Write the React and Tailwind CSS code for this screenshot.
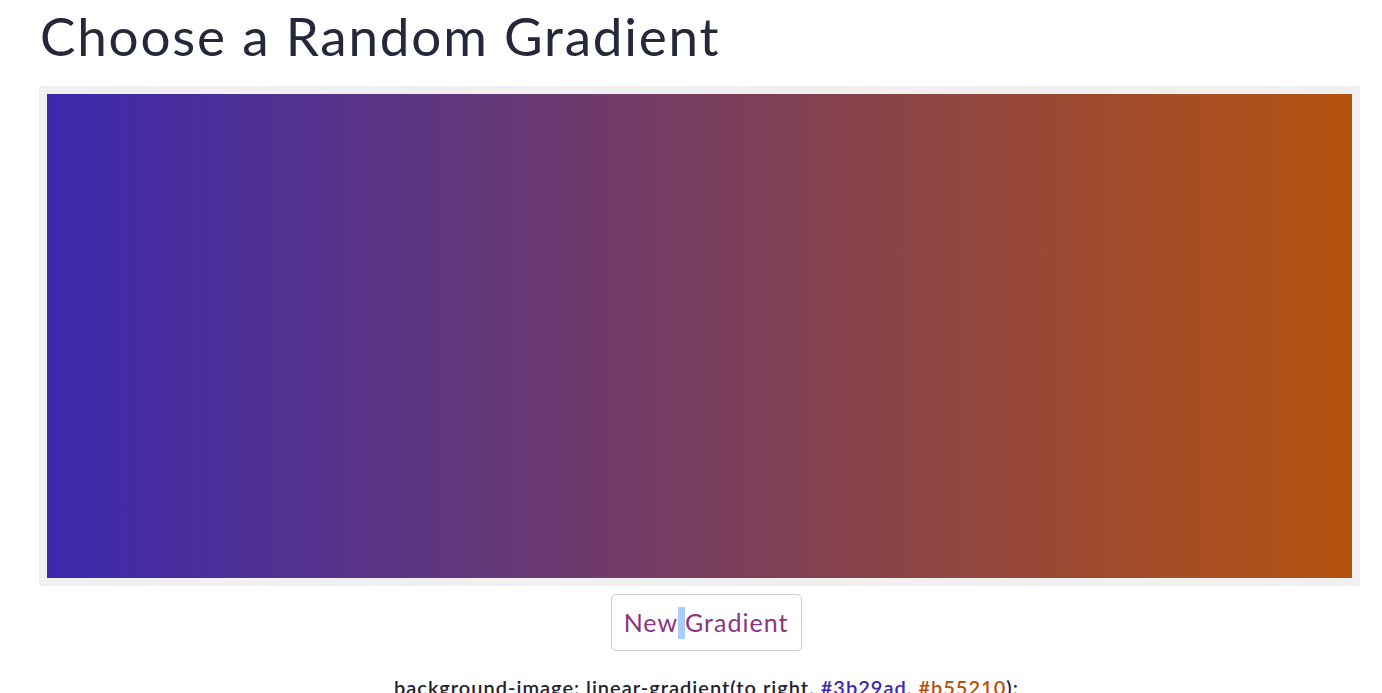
export default function App() {
  return (
    <div className="min-h-screen bg-white" style={{ fontFamily: '"Lato", "Open Sans", sans-serif' }}>
      <div className="ml-[39px] w-[1321px] flex flex-col">
        <h1 className="text-[53px] leading-[60px] pt-[6px] pl-[1px] text-[#252839] font-normal tracking-[1.8px]">
          Choose a Random Gradient
        </h1>
        <div className="mt-[20px] h-[500px] bg-[#f0f0f0] p-[8px]">
          <div className="w-full h-full bg-[linear-gradient(to_right,#3b29ad,#b55210)]" />
        </div>
        <div className="flex justify-center mt-[8px]">
          <button className="h-[57px] w-[191px] border border-[#cccccc] rounded-[5px] bg-white text-[25px] tracking-[1px] text-[#8a3483] flex items-center justify-center ml-[13px]">
            New<span className="bg-[#aaccf8] inline-block w-[7px] h-[32px]"> </span>Gradient
          </button>
        </div>
        <p className="mt-[24px] text-center text-[20px] font-semibold tracking-[1px] text-[#1f2230] leading-[24px] ml-[14px]">
          background-image: linear-gradient(to right, <span className="text-[#3b29ad]">#3b29ad</span>, <span className="text-[#b55210]">#b55210</span>);
        </p>
      </div>
    </div>
  );
}
